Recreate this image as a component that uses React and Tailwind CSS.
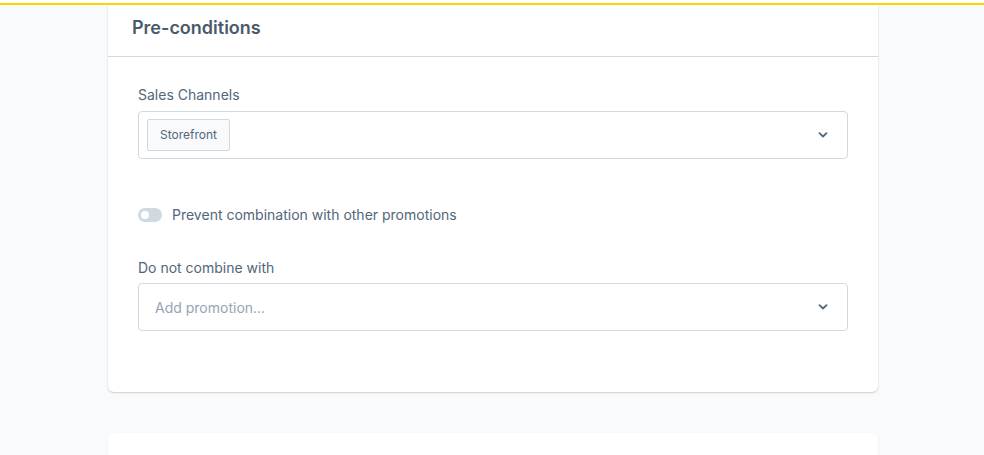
import React from "react";

function Chevron() {
  return (
    <svg width="10" height="6" viewBox="0 0 10 6" fill="none">
      <path d="M1.5 1.2 L5 4.5 L8.5 1.2" stroke="#52667a" strokeWidth="1.8" strokeLinecap="round" strokeLinejoin="round" />
    </svg>
  );
}

export default function App() {
  return (
    <div className="w-[984px] h-[455px] overflow-hidden bg-[#f9fafb] flex flex-col" style={{ fontFamily: "Inter, 'Noto Sans', sans-serif" }}>
      <div className="h-[3px] bg-white shrink-0" />
      <div className="h-[2px] bg-[#ffd500] shrink-0" />
      <div className="w-[770px] ml-[108px] flex flex-col shrink-0">
        <div className="bg-white rounded-b-[6px] shadow-[0_1px_2px_rgba(0,0,0,0.18)] flex flex-col">
          <div className="h-[52px] px-6 pb-[7px] flex items-center border-b border-[#d1d9e0]">
            <span className="text-[18px] font-semibold text-[#4a5a6b]">Pre-conditions</span>
          </div>
          <div className="px-[30px] pt-[28px] pb-[61px] flex flex-col">
            <div className="text-[14px] leading-[20px] text-[#52667a] mb-[6px]">Sales Channels</div>
            <div className="h-[48px] border border-[#d1d9e0] rounded-[4px] flex items-center pl-[8px] pr-[19px] justify-between">
              <div className="h-[32px] px-[12px] flex items-center bg-[#f9fafb] border border-[#d1d9e0] rounded-[2px] text-[12px] text-[#52667a]">Storefront</div>
              <Chevron />
            </div>
            <div className="mt-[46px] flex items-center gap-[10px]">
              <div className="w-[24px] h-[14px] rounded-full bg-[#d1d9e0] flex items-center pl-[3px]">
                <div className="w-[8px] h-[8px] rounded-full bg-white" />
              </div>
              <span className="text-[14px] leading-[20px] text-[#52667a]">Prevent combination with other promotions</span>
            </div>
            <div className="mt-[33px] text-[14px] leading-[20px] text-[#52667a] mb-[5px]">Do not combine with</div>
            <div className="h-[48px] border border-[#d1d9e0] rounded-[4px] flex items-center pl-[16px] pr-[19px] justify-between">
              <span className="text-[14px] text-[#94a4b4]">Add promotion...</span>
              <Chevron />
            </div>
          </div>
        </div>
        <div className="mt-[41px] h-[60px] bg-white rounded-t-[6px] shadow-[0_1px_2px_rgba(0,0,0,0.08)]" />
      </div>
    </div>
  );
}
